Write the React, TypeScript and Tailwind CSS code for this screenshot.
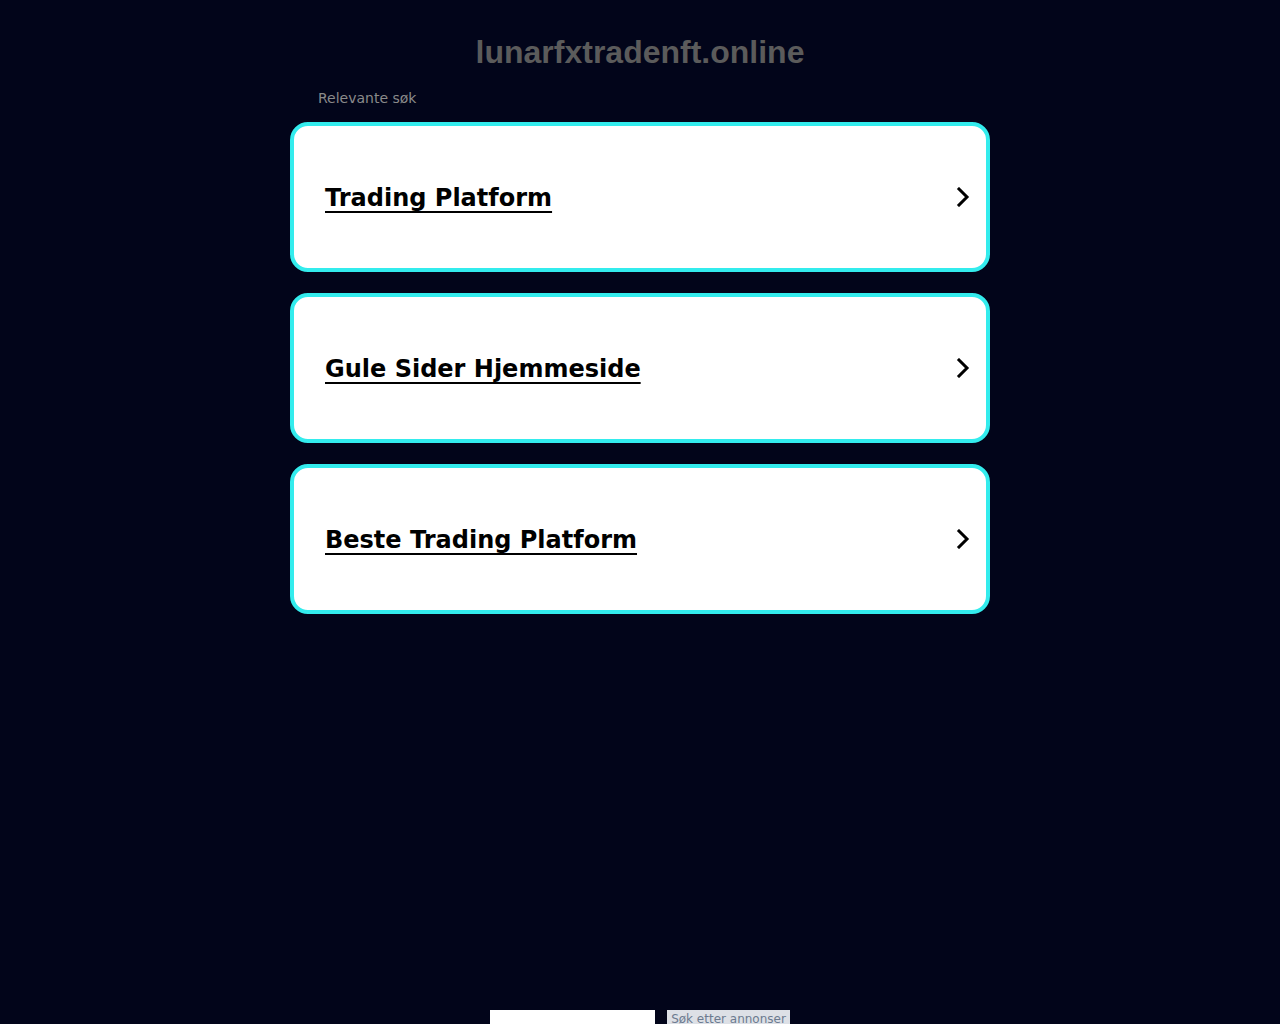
import React from 'react';

const links = ['Trading Platform', 'Gule Sider Hjemmeside', 'Beste Trading Platform'];

const Chevron: React.FC = () => (
    <svg width="14" height="20" viewBox="0 0 14 20" fill="none" className="shrink-0">
        <path d="M3 2l8 8-8 8" stroke="#000" strokeWidth="3" strokeLinecap="square" strokeLinejoin="miter" />
    </svg>
);

const LinkCard: React.FC<{ label: string }> = ({ label }) => (
    <a href="#" className="flex h-[150px] items-center justify-between rounded-[18px] border-4 border-[#33eced] bg-white pl-[31px] pr-[16px]">
        <span className="pt-[2px] text-[24px] font-bold text-black underline underline-offset-[5px] [font-family:'DejaVu_Sans',sans-serif]">
            {label}
        </span>
        <Chevron />
    </a>
);

export default function App() {
    return (
        <div className="min-h-screen overflow-hidden bg-[#02051a]">
            <div className="mx-auto w-[700px] pt-[32px]">
                <h1 className="text-center text-[32px] font-bold leading-[40px] text-[#5b5b5b] [font-family:'Liberation_Sans',Arial,sans-serif]">
                    lunarfxtradenft.online
                </h1>
                <p className="mt-[16px] pl-[28px] text-[14px] leading-[20px] text-[#8a8a8a] [font-family:'DejaVu_Sans',sans-serif]">
                    Relevante søk
                </p>
                <div className="mt-[14px] flex flex-col gap-[21px]">
                    {links.map((l) => (
                        <LinkCard key={l} label={l} />
                    ))}
                </div>
            </div>
            <div className="mt-[396px] flex justify-center gap-[12px]">
                <div className="h-[22px] w-[165px] bg-white" />
                <div className="h-[22px] bg-[#dde0e6] px-[4px] pt-[1px] text-[12px] leading-[16px] text-[#6b7a8f] [font-family:'DejaVu_Sans',sans-serif]">
                    Søk etter annonser
                </div>
            </div>
        </div>
    );
}
